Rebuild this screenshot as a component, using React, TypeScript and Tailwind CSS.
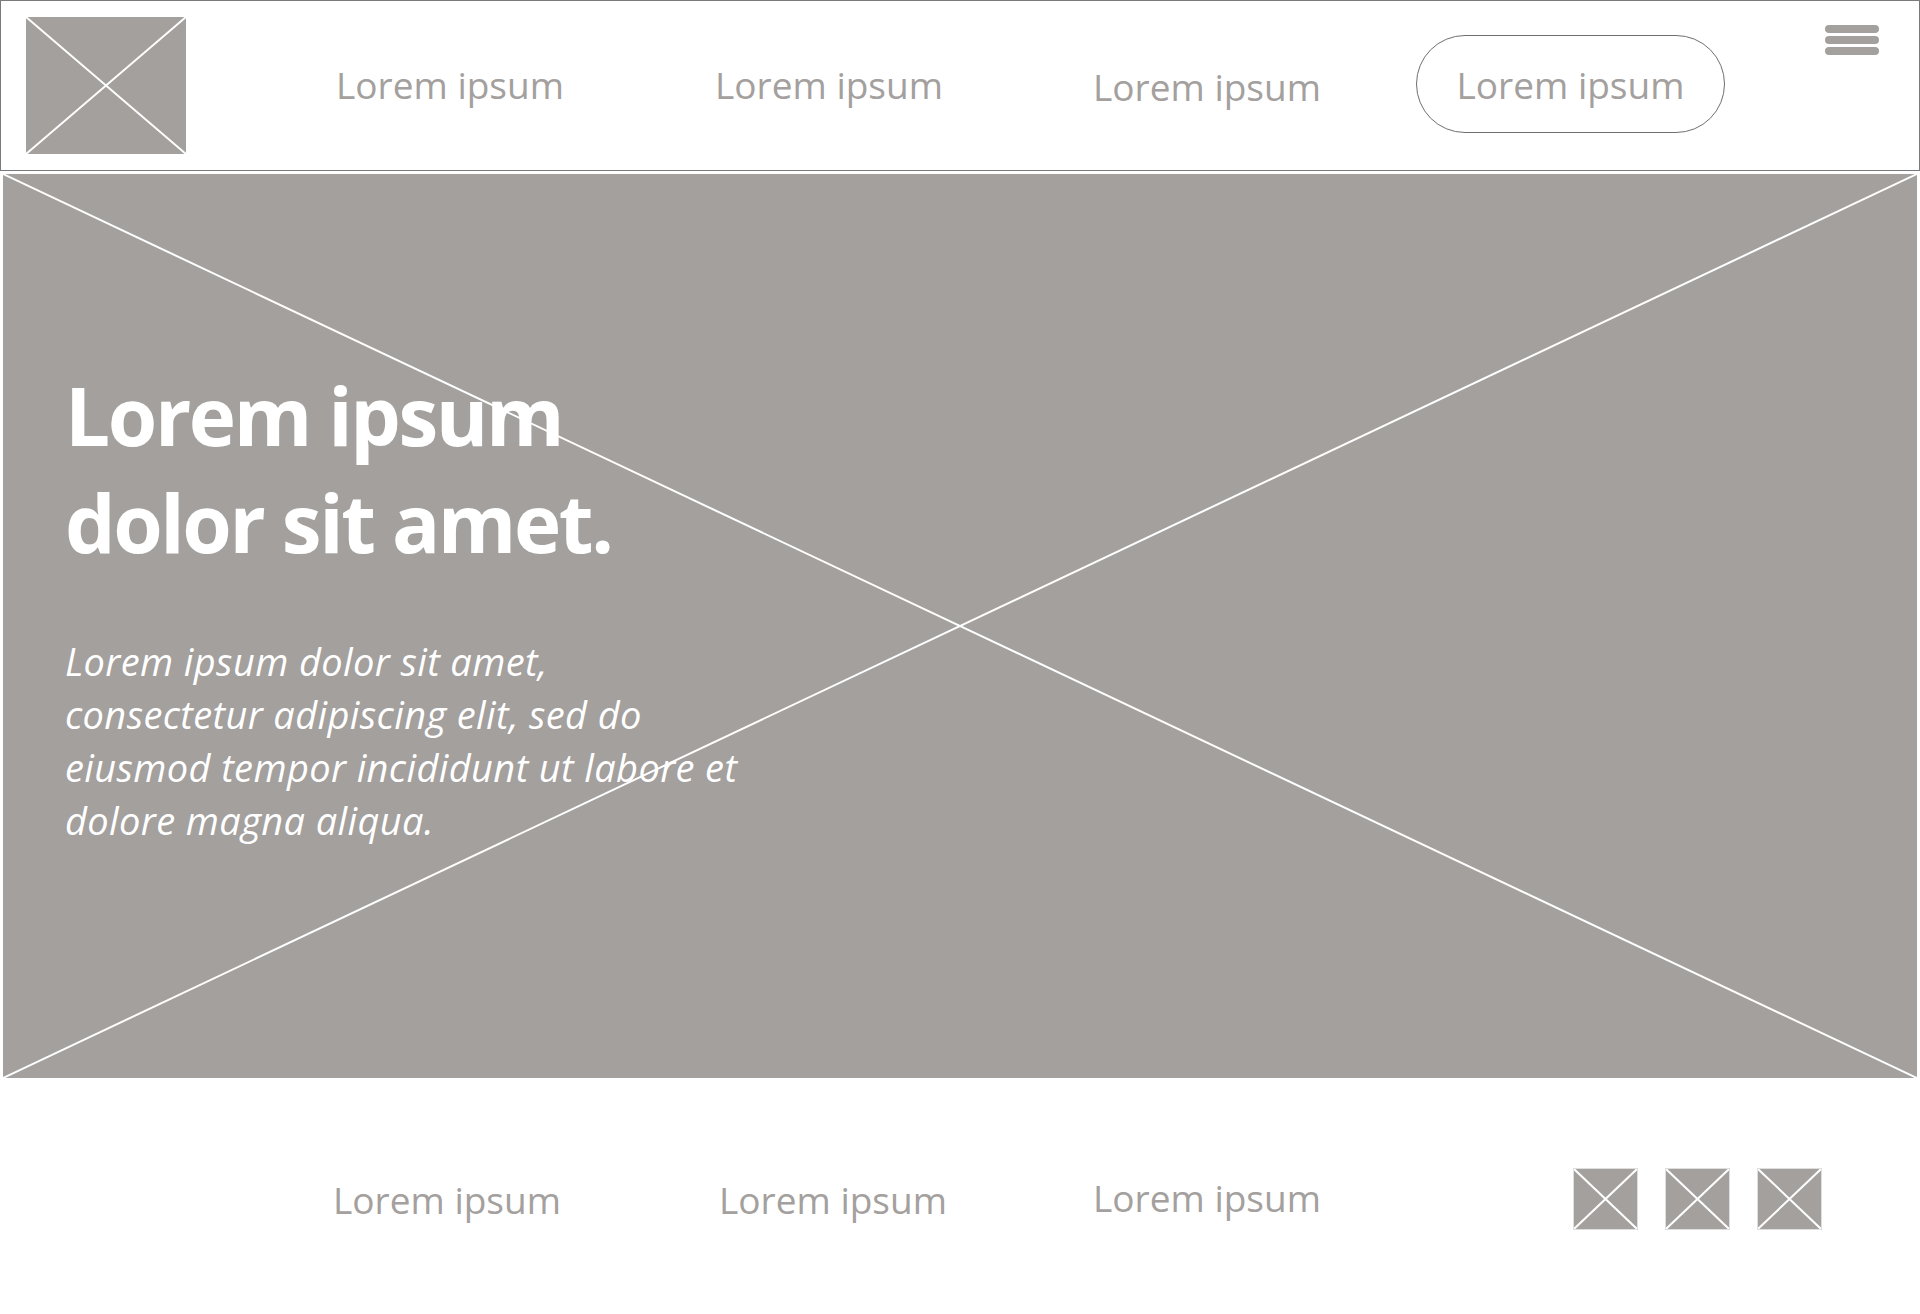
import React from "react";

const Cross = ({ stroke = 1.5 }: { stroke?: number }) => (
  <svg
    className="absolute inset-0 h-full w-full"
    viewBox="0 0 100 100"
    preserveAspectRatio="none"
    aria-hidden="true"
  >
    <line x1="0" y1="0" x2="100" y2="100" stroke="#ffffff" strokeWidth={stroke} vectorEffect="non-scaling-stroke" />
    <line x1="100" y1="0" x2="0" y2="100" stroke="#ffffff" strokeWidth={stroke} vectorEffect="non-scaling-stroke" />
  </svg>
);

const font = { fontFamily: '"Open Sans", "Noto Sans", sans-serif' };

export default function App() {
  return (
    <div className="w-[1920px] min-h-[1314px] bg-white" style={font}>
      {/* Header */}
      <header className="flex h-[171px] w-[1920px] items-center border border-[#7a7a7a] bg-white">
        <div className="relative ml-[25px] mt-[16px] h-[137px] w-[160px] self-start bg-[#a3a09e]">
          <Cross stroke={2} />
        </div>
        <a className="ml-[114px] mb-[2px] w-[300px] text-center text-[37px] leading-none text-[#a3a09e]">Lorem ipsum</a>
        <a className="ml-[79px] mb-[2px] w-[300px] text-center text-[37px] leading-none text-[#a3a09e]">Lorem ipsum</a>
        <a className="ml-[78px] mt-[2px] w-[300px] text-center text-[37px] leading-none text-[#a3a09e]">Lorem ipsum</a>
        <button className="ml-[59px] mb-[3px] flex h-[98px] w-[309px] items-center justify-center rounded-full border border-[#6f6f6f] text-[37px] leading-none text-[#a3a09e]">
          <span className="mt-[1px]">Lorem ipsum</span>
        </button>
        <div className="ml-[100px] mt-[24px] flex w-[54px] flex-col gap-[3px] self-start">
          <span className="block h-[8px] w-full rounded-full bg-[#a3a09e]" />
          <span className="block h-[8px] w-full rounded-full bg-[#a3a09e]" />
          <span className="block h-[8px] w-full rounded-full bg-[#a3a09e]" />
        </div>
      </header>

      {/* Hero */}
      <section className="relative ml-[3px] mt-[3px] h-[904px] w-[1914px] bg-[#a3a09e]">
        <Cross stroke={2} />
        <div className="relative pl-[62px] pt-[187px]">
          <h1 className="text-[80px] font-bold leading-[107px] tracking-[-0.03em] text-white">
            Lorem ipsum
            <br />
            dolor sit amet.
          </h1>
          <p className="mt-[60px] text-[38px] italic leading-[53px] tracking-[0.01em] text-white">
            Lorem ipsum dolor sit amet,
            <br />
            consectetur adipiscing elit, sed do
            <br />
            eiusmod tempor incididunt ut labore et
            <br />
            dolore magna aliqua.
          </p>
        </div>
      </section>

      {/* Footer */}
      <footer className="mt-[90px] flex h-[62px] items-center pl-[297px]">
        <a className="w-[300px] text-center text-[37px] leading-none text-[#a3a09e]">Lorem ipsum</a>
        <a className="ml-[86px] w-[300px] text-center text-[37px] leading-none text-[#a3a09e]">Lorem ipsum</a>
        <a className="ml-[74px] mb-1 w-[300px] text-center text-[37px] leading-none text-[#a3a09e]">Lorem ipsum</a>
        <div className="relative ml-[216px] h-[62px] w-[65px] border border-[#dedede] bg-[#a3a09e]">
          <Cross stroke={2} />
        </div>
        <div className="relative ml-[27px] h-[62px] w-[65px] border border-[#dedede] bg-[#a3a09e]">
          <Cross stroke={2} />
        </div>
        <div className="relative ml-[27px] h-[62px] w-[65px] border border-[#dedede] bg-[#a3a09e]">
          <Cross stroke={2} />
        </div>
      </footer>
    </div>
  );
}
